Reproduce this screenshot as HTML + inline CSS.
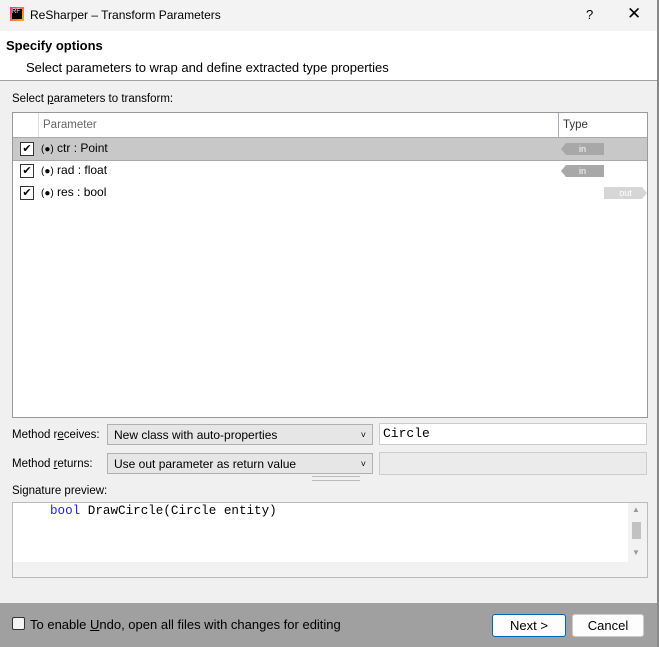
<!DOCTYPE html><html><head><style>
body{margin:0;width:659px;height:647px;overflow:hidden;background:#f0f0f0;font-family:"Liberation Sans",sans-serif;font-size:12px;color:#000;position:relative}
.a{position:absolute}
.cb{position:absolute;width:12px;height:12px;border:1px solid #333;background:#fff;font-size:11px;line-height:12px;text-align:center}
.row{position:absolute;left:13px;width:634px;height:22px}
.tag{position:absolute;height:12px;background:#a8a8a8;color:#fff;font-size:9px;line-height:12px;text-align:center}
.combo{position:absolute;background:#e6e6e6;border:1px solid #b0b0b0;height:21px;line-height:21px;padding-left:6px;box-sizing:border-box}
</style></head><body>
<div class="a" style="left:0;top:0;width:657px;height:31px;background:#f3f3f3"></div>
<div class="a" style="left:10px;top:7px;width:14px;height:14px;background:linear-gradient(135deg,#ff2aa0,#ffb000)"></div>
<div class="a" style="left:12px;top:9px;width:10px;height:10px;background:#000;color:#fff;font-size:6px;line-height:7px">RF</div>
<div class="a" style="left:30px;top:8px;font-size:12px">ReSharper – Transform Parameters</div>
<div class="a" style="left:586px;top:7px;font-size:13px">?</div>
<div class="a" style="left:627px;top:4px;font-size:17px;font-weight:300">✕</div>
<div class="a" style="left:0;top:31px;width:657px;height:49px;background:#fff;border-bottom:1px solid #a0a0a0"></div>
<div class="a" style="left:6px;top:38px;font-weight:bold;font-size:13px">Specify options</div>
<div class="a" style="left:26px;top:60px;font-size:13px">Select parameters to wrap and define extracted type properties</div>
<div class="a" style="left:657px;top:0;width:2px;height:647px;background:#888"></div>
<div class="a" style="left:12px;top:93px;font-size:11.5px">Select <u>p</u>arameters to transform:</div>
<div class="a" style="left:12px;top:112px;width:634px;height:304px;background:#fff;border:1px solid #999"></div>
<div class="a" style="left:13px;top:113px;width:634px;height:24px;border-bottom:1px solid #aaa"></div>
<div class="a" style="left:38px;top:113px;width:1px;height:24px;background:#ddd"></div>
<div class="a" style="left:558px;top:113px;width:1px;height:24px;background:#aac"></div>
<div class="a" style="left:43px;top:119px;color:#666;font-size:11.5px">Parameter</div>
<div class="a" style="left:563px;top:119px;color:#333;font-size:11.5px">Type</div>
<div class="row" style="top:138px;background:#c8c8c8;border-bottom:1px solid #aaa"></div>
<div class="cb" style="left:20px;top:142px">✔</div><div class="a" style="left:41px;top:141px;font-size:12px"><span style="font-size:10px">(●)</span> ctr : Point</div>
<div class="tag" style="left:561px;top:143px;width:43px;clip-path:polygon(5px 0,100% 0,100% 100%,5px 100%,0 50%)">in</div>
<div class="cb" style="left:20px;top:164px">✔</div><div class="a" style="left:41px;top:163px;font-size:12px"><span style="font-size:10px">(●)</span> rad : float</div>
<div class="tag" style="left:561px;top:165px;width:43px;clip-path:polygon(5px 0,100% 0,100% 100%,5px 100%,0 50%)">in</div>
<div class="cb" style="left:20px;top:186px">✔</div><div class="a" style="left:41px;top:185px;font-size:12px"><span style="font-size:10px">(●)</span> res : bool</div>
<div class="tag" style="left:604px;top:187px;width:43px;background:#d6d6d6;clip-path:polygon(0 0,38px 0,100% 50%,38px 100%,0 100%)">out</div>
<div class="a" style="left:12px;top:429px;font-size:11.5px">Method r<u>e</u>ceives:</div>
<div class="combo" style="left:107px;top:424px;width:266px">New class with auto-properties<span style="position:absolute;right:6px;top:0;font-size:9px">˅</span></div>
<div class="a" style="left:379px;top:423px;width:268px;height:22px;background:#fff;border:1px solid #ccc;box-sizing:border-box;font-family:'Liberation Mono',monospace;font-size:13px;line-height:20px;padding-left:3px">Circle</div>
<div class="a" style="left:12px;top:458px;font-size:11.5px">Method <u>r</u>eturns:</div>
<div class="combo" style="left:107px;top:453px;width:266px">Use out parameter as return value<span style="position:absolute;right:6px;top:0;font-size:9px">˅</span></div>
<div class="a" style="left:379px;top:452px;width:268px;height:23px;background:#ebebeb;border:1px solid #ccc;box-sizing:border-box"></div>
<div class="a" style="left:312px;top:476px;width:48px;height:3px;border-top:1px solid #bbb;border-bottom:1px solid #bbb"></div>
<div class="a" style="left:12px;top:485px;font-size:11.5px">Signature preview:</div>
<div class="a" style="left:12px;top:502px;width:634px;height:74px;background:#f2f2f2;border:1px solid #bbb"></div>
<div class="a" style="left:13px;top:503px;width:615px;height:59px;background:#fff"></div>
<div class="a" style="left:50px;top:504px;font-family:'Liberation Mono',monospace;font-size:12.6px"><span style="color:#1a1aff">bool</span> DrawCircle(Circle entity)</div>
<div class="a" style="left:632px;top:522px;width:9px;height:17px;background:#c2c2c2"></div>
<div class="a" style="left:632px;top:505px;color:#999;font-size:8px">▲</div>
<div class="a" style="left:632px;top:548px;color:#999;font-size:8px">▼</div>
<div class="a" style="left:0;top:603px;width:657px;height:44px;background:#a0a0a0"></div>
<div class="a" style="left:12px;top:617px;width:11px;height:11px;border:1px solid #333;border-radius:2px;background:#f4f4f4"></div>
<div class="a" style="left:30px;top:617px;font-size:13px">To enable <u>U</u>ndo, open all files with changes for editing</div>
<div class="a" style="left:492px;top:614px;width:72px;height:21px;background:#fdfdfd;border:1px solid #0067c0;border-radius:3px;text-align:center;line-height:22px;font-size:13px">Next &gt;</div>
<div class="a" style="left:572px;top:614px;width:70px;height:21px;background:#fdfdfd;border:1px solid #ccc;border-radius:3px;text-align:center;line-height:22px;font-size:13px">Cancel</div>
</body></html>
